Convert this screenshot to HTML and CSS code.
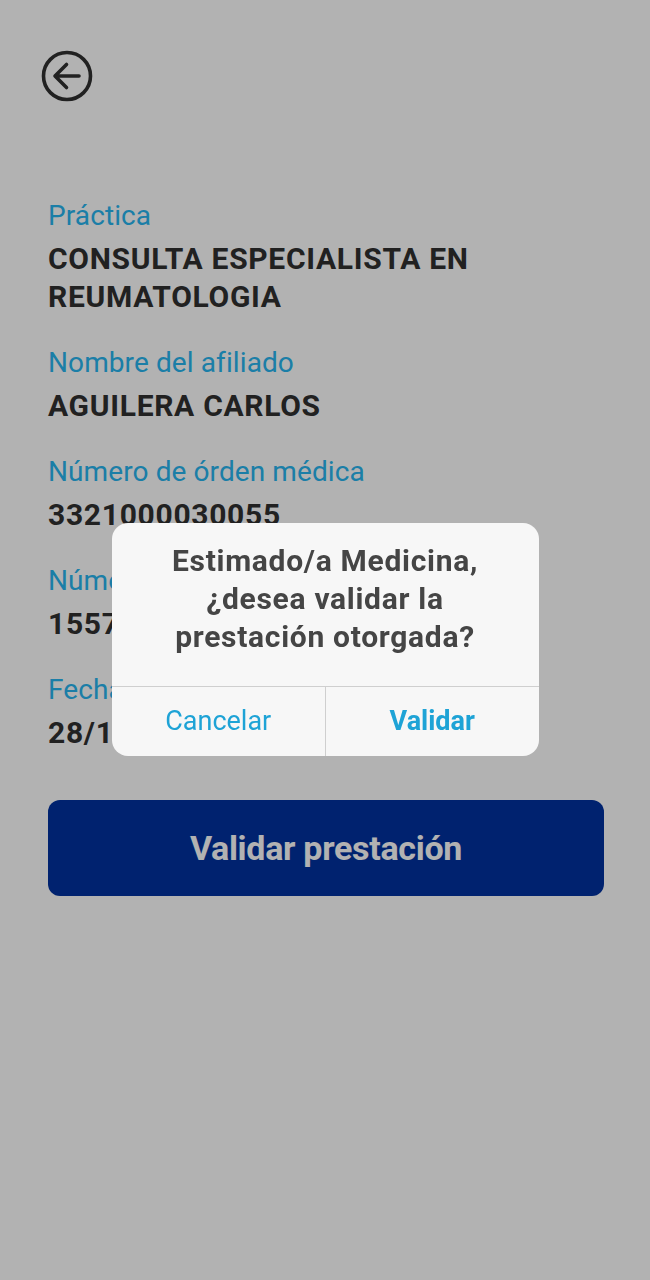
FILE: index.html
```html
<!DOCTYPE html>
<html lang="es">
<head>
<meta charset="utf-8">
<link rel="stylesheet" href="styles.css">
</head>
<body>
<div class="page">
  <button class="back" aria-label="Volver">
    <svg width="54" height="54" viewBox="0 0 54 54">
      <circle cx="27" cy="27" r="23.5" fill="none" stroke="#303030" stroke-width="3.6"/>
      <path d="M39 27H16M26.5 15.5L15 27L26.5 38.5" fill="none" stroke="#303030" stroke-width="3.6" stroke-linecap="round" stroke-linejoin="round"/>
    </svg>
  </button>
  <div class="details">
    <div class="field">
      <div class="label">Práctica</div>
      <div class="value">CONSULTA ESPECIALISTA EN REUMATOLOGIA</div>
    </div>
    <div class="field">
      <div class="label">Nombre del afiliado</div>
      <div class="value">AGUILERA CARLOS</div>
    </div>
    <div class="field">
      <div class="label">Número de órden médica</div>
      <div class="value">3321000030055</div>
    </div>
    <div class="field">
      <div class="label">Número de afiliado</div>
      <div class="value">155702345600</div>
    </div>
    <div class="field">
      <div class="label">Fecha de prestación</div>
      <div class="value">28/10/2021</div>
    </div>
  </div>
  <button class="primary">Validar prestación</button>
</div>
<div class="backdrop">
  <div class="dialog">
    <div class="dialog-title">Estimado/a Medicina,<br>¿desea validar la prestación otorgada?</div>
    <div class="dialog-actions">
      <button class="action">Cancelar</button>
      <button class="action strong">Validar</button>
    </div>
  </div>
</div>
</body>
</html>
```
FILE: styles.css
```css
* { box-sizing: border-box; }
html, body { margin: 0; padding: 0; }
body {
  width: 650px;
  height: 1280px;
  background: #ffffff;
  font-family: Roboto, "Noto Sans", "Liberation Sans", sans-serif;
  overflow: hidden;
}
.page {
  padding: 49px 46px 0 48px;
  display: flex;
  flex-direction: column;
}
.back {
  width: 54px;
  height: 54px;
  padding: 0;
  margin-left: -8px;
  border: 0;
  background: none;
  display: block;
}
.back svg { display: block; }
.details {
  margin-top: 97px;
  display: flex;
  flex-direction: column;
  gap: 31px;
}
.field {
  display: flex;
  flex-direction: column;
  gap: 8px;
}
.label {
  font-size: 28px;
  line-height: 32px;
  color: #27b5ef;
  letter-spacing: 0.1px;
}
.value {
  font-size: 30px;
  line-height: 38px;
  font-weight: 700;
  color: #303030;
  letter-spacing: 0.7px;
}
.primary {
  margin-top: 48px;
  height: 96px;
  width: 556px;
  border: 0;
  border-radius: 12px;
  background: #00329f;
  color: #ffffff;
  font-family: Roboto, "Noto Sans", sans-serif;
  font-weight: 700;
  font-size: 34px;
  letter-spacing: -0.3px;
  display: flex;
  align-items: center;
  justify-content: center;
}
.backdrop {
  position: fixed;
  inset: 0;
  background: rgba(0, 0, 0, 0.3);
  display: flex;
  align-items: center;
  justify-content: center;
}
.dialog {
  width: 427px;
  background: #f7f7f7;
  border-radius: 16px;
  overflow: hidden;
  margin-top: -2px;
}
.dialog-title {
  padding: 19px 28px 30px;
  text-align: center;
  font-size: 30px;
  line-height: 38px;
  font-weight: 700;
  color: #454545;
  letter-spacing: 0.7px;
}
.dialog-actions {
  display: grid;
  grid-template-columns: 1fr 1fr;
  border-top: 1px solid #cfcfcf;
}
.action {
  height: 69px;
  border: 0;
  background: none;
  font-family: Roboto, "Noto Sans", sans-serif;
  font-size: 27px;
  color: #1ea3d6;
  padding: 0;
}
.action + .action { border-left: 1px solid #cfcfcf; }
.action.strong { font-weight: 700; }
```
